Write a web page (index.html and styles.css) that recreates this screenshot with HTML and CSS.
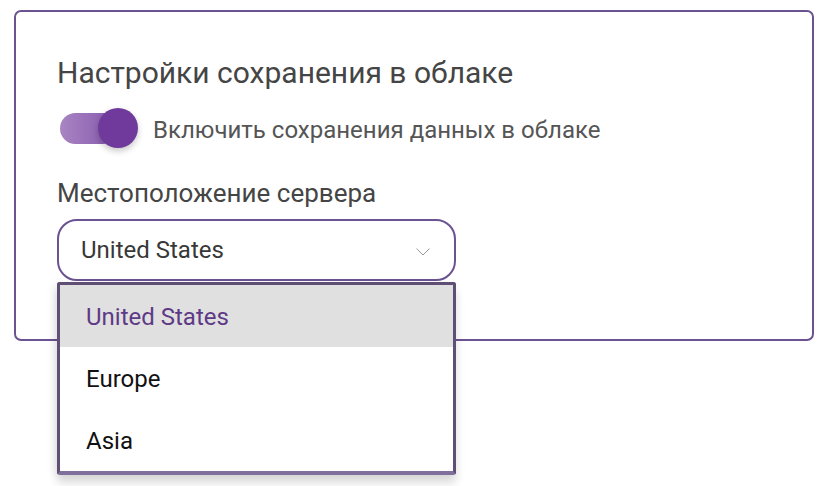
FILE: index.html
```html
<!DOCTYPE html>
<html lang="ru">
<head>
<meta charset="utf-8">
<title>Настройки сохранения в облаке</title>
<link rel="stylesheet" href="styles.css">
</head>
<body>
<div class="card">
  <h2 class="card-title">Настройки сохранения в облаке</h2>
  <div class="toggle-row">
    <span class="toggle"><span class="toggle-knob"></span></span>
    <span class="toggle-label">Включить сохранения данных в облаке</span>
  </div>
  <div class="field-label">Местоположение сервера</div>
  <div class="select-wrap">
    <div class="select">
      <span>United States</span>
      <svg class="chevron" width="14" height="8" viewBox="0 0 14 8"><path d="M0.5 0.5 L7 7 L13.5 0.5" fill="none" stroke="#9a9a9a" stroke-width="1"/></svg>
    </div>
    <ul class="options">
      <li class="selected">United States</li>
      <li>Europe</li>
      <li>Asia</li>
    </ul>
  </div>
</div>
</body>
</html>
```
FILE: styles.css
```css
html { height: 100%; }
body { margin: 0; min-height: 486px; background: #fff; font-family: Roboto, "Noto Sans", sans-serif; }
.card { box-sizing: border-box; width: 800px; height: 331px; margin: 10px 0 0 14px; border: 2px solid #6b5391; border-radius: 7px; padding: 44px 40px 0 41px; }
.card-title { margin: 0; font-size: 30px; font-weight: 400; line-height: 34px; color: #454545; }
.toggle-row { display: flex; align-items: center; height: 40px; margin-top: 18px; }
.toggle { position: relative; display: block; width: 58px; height: 31px; margin-left: 3px; border-radius: 16px; background: linear-gradient(to right, #a885c2, #8656ad); }
.toggle-knob { position: absolute; right: -20px; top: -5px; width: 40px; height: 40px; border-radius: 50%; background: #6f3a9c; box-shadow: 0 3px 6px rgba(0,0,0,0.22); }
.toggle-label { margin-left: 35px; padding-top: 4px; font-size: 24px; color: #555; }
.field-label { margin-top: 30px; font-size: 26px; line-height: 30px; color: #454545; }
.select-wrap { position: relative; margin-top: 11px; width: 399px; z-index: 10; }
.select { box-sizing: border-box; height: 62px; display: flex; align-items: center; justify-content: space-between; padding: 0 24px 0 22px; border: 2px solid #6b5391; border-radius: 20px; font-size: 24px; color: #383838; }
.chevron { margin-top: 3px; }
.options { position: absolute; left: 0; top: 63px; box-sizing: border-box; width: 399px; margin: 0; padding: 0; list-style: none; background: #fff; border: 3px solid #5f4f74; border-bottom: 4px solid #82709c; border-radius: 3px; box-shadow: 0 8px 10px rgba(0,0,0,0.14), -4px 0 8px rgba(0,0,0,0.05); }
.options li { height: 62px; line-height: 64px; padding-left: 26px; font-size: 24px; color: #111; }
.options li.selected { background: #e0e0e0; color: #5e3a86; }
```
